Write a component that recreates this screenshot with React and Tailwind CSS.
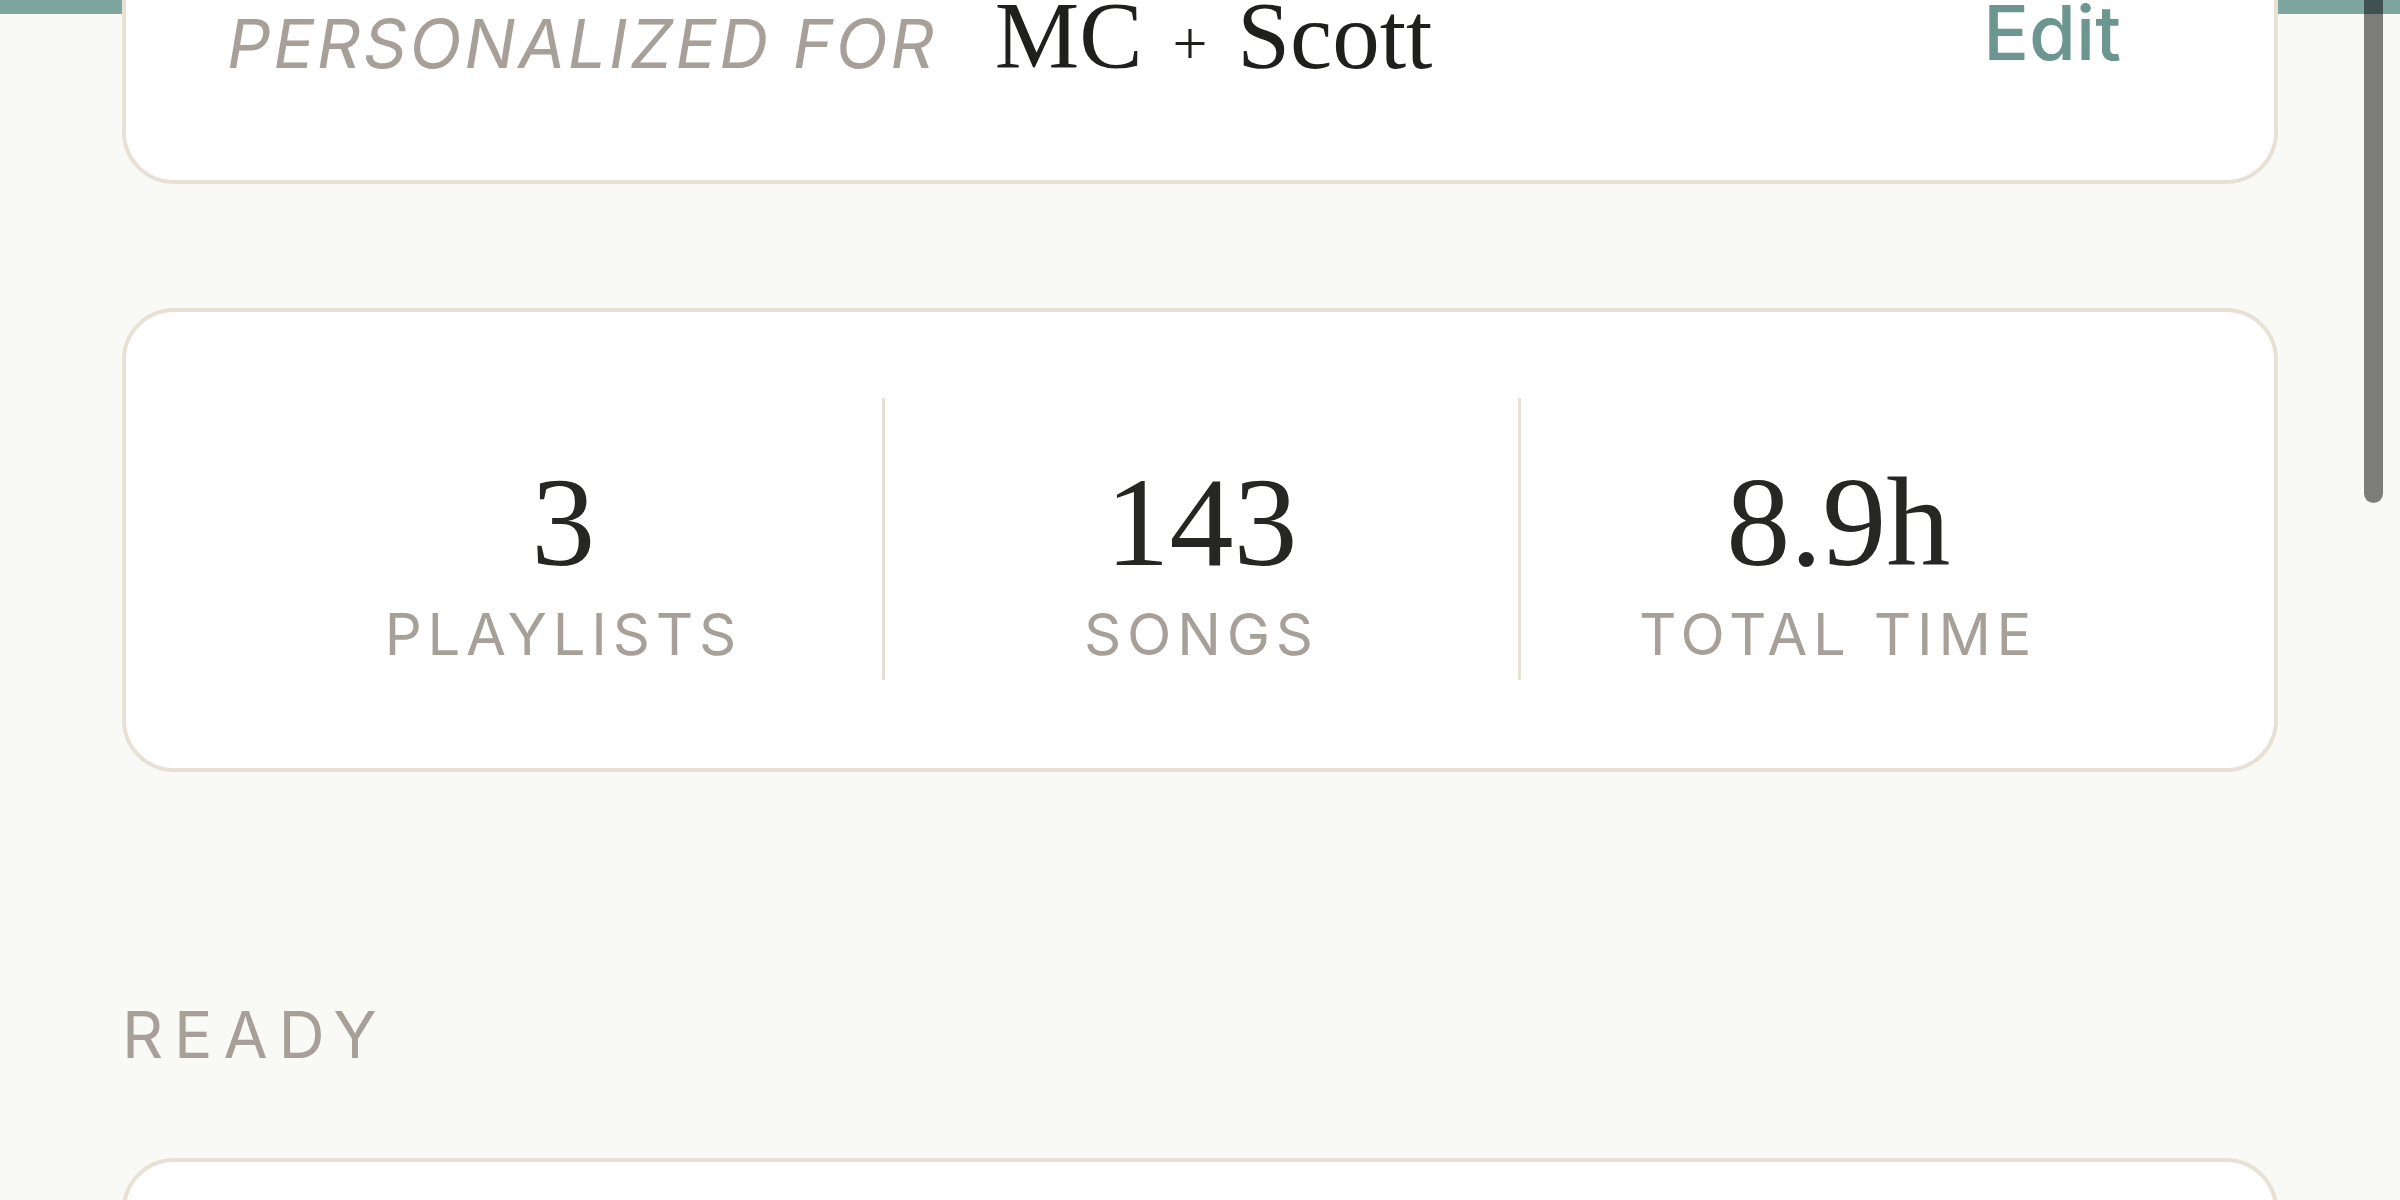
import React from 'react'

const stats = [
  { value: '3', label: 'PLAYLISTS' },
  { value: '143', label: 'SONGS' },
  { value: '8.9h', label: 'TOTAL TIME' },
]

const sans = "font-['Inter','Noto_Sans',sans-serif]"
const serif = "font-['Liberation_Serif','DejaVu_Serif',serif]"

function StatColumn({ value, label, first }) {
  return (
    <div
      className={
        'flex h-[282px] flex-col items-center pt-[60px] ' +
        (first ? '' : 'border-l-[3px] border-[#e7e1d5]')
      }
    >
      <div className={`${serif} text-[128px] leading-none text-[#262624]`}>{value}</div>
      <div className={`${sans} mt-[19px] text-[58px] leading-none tracking-[0.1em] text-[#a6a099]`}>
        {label}
      </div>
    </div>
  )
}

export default function App() {
  return (
    <div className="relative h-[1200px] overflow-hidden bg-[#f9f9f5]">
      {/* header band, mostly scrolled away */}
      <div className="h-[14px] bg-[#7fa59f]" />

      <div className="px-[122px]">
        {/* personalized card */}
        <div className="-mt-[126px] flex h-[296px] items-center justify-between rounded-[52px] border-4 border-[#e7e1d5] bg-white pl-[101px] pr-[153px]">
          <div className="flex items-baseline gap-[58px]">
            <span className={`${sans} text-[68px] italic leading-none tracking-[0.04em] text-[#a6a099]`}>
              PERSONALIZED FOR
            </span>
            <span className={`${serif} text-[95px] leading-none text-[#1f1f1d]`}>
              MC <span className="px-[6px] align-[4px] text-[62px]">+</span> Scott
            </span>
          </div>
          <button className={`${sans} mb-[8px] text-[76px] font-medium leading-none text-[#6c968f]`}>
            Edit
          </button>
        </div>

        {/* stats */}
        <div className="mt-[124px] rounded-[52px] border-4 border-[#e7e1d5] bg-white px-[119px] pb-[88px] pt-[86px]">
          <div className="grid grid-cols-3">
            {stats.map((s, i) => (
              <StatColumn key={s.label} value={s.value} label={s.label} first={i === 0} />
            ))}
          </div>
        </div>

        <div className={`${sans} mt-[231px] text-[64px] leading-none tracking-[0.17em] text-[#a6a099]`}>
          READY
        </div>

        <div className="mt-[91px] h-[300px] rounded-[52px] border-4 border-[#e7e1d5] bg-white" />
      </div>

      {/* overlay scrollbar */}
      <div className="absolute -top-[20px] right-[17px] h-[523px] w-[19px] rounded-full bg-black/50" />
    </div>
  )
}
